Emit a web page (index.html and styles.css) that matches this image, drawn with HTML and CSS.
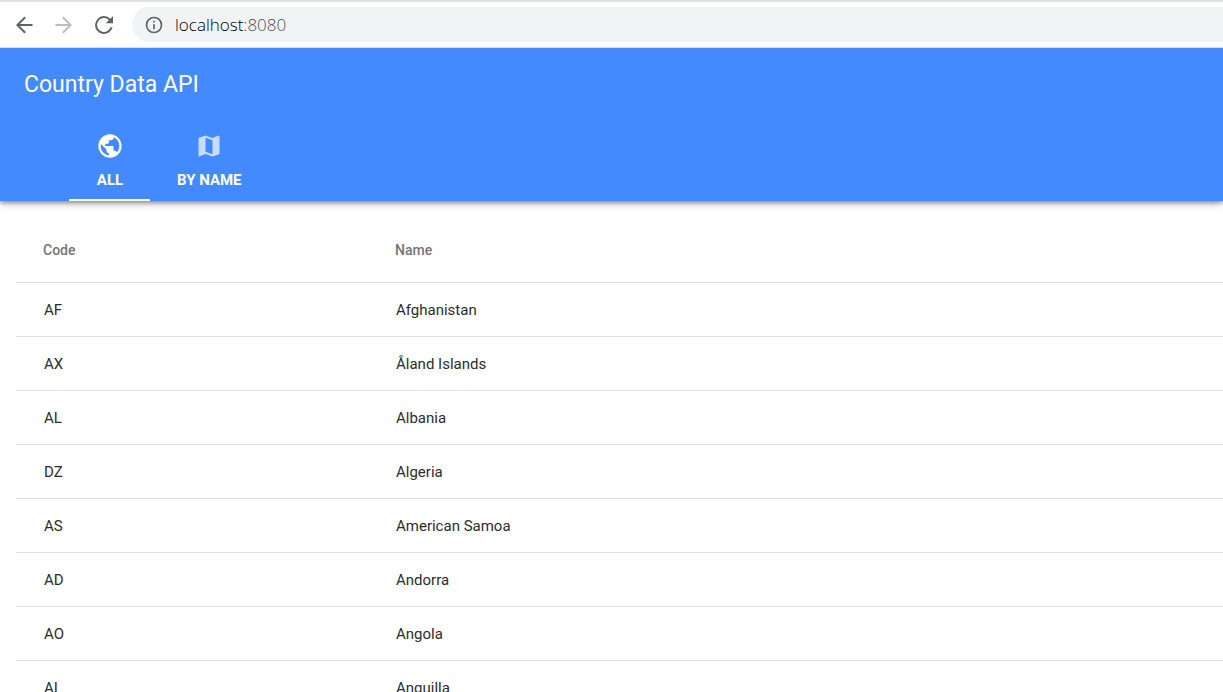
FILE: index.html
```
<!DOCTYPE html>
<html lang="en">
<head>
<meta charset="utf-8">
<title>Country Data API</title>
<link rel="stylesheet" href="styles.css">
</head>
<body>
<div class="browser">
  <button class="nav" aria-label="Back"><svg viewBox="0 0 24 24"><path d="M20 11H7.830l6.090-6.090L12.500 3.500 4 12l8.500 8.500 1.420-1.410L7.830 13H20.500v-2z"/></svg></button>
  <button class="nav nav-off" aria-label="Forward" disabled><svg viewBox="0 0 24 24"><path d="M4 11h12.170l-6.090-6.090L11.500 3.500 20 12l-8.500 8.500-1.420-1.410L16.170 13H3.500v-2z"/></svg></button>
  <button class="nav" aria-label="Reload"><svg viewBox="0 0 24 24"><path d="M18.300 5.700A8.900 8.900 0 0 0 12 3.100a8.900 8.900 0 1 0 8.600 11.100h-2.100A6.900 6.900 0 1 1 12 5.100c1.900 0 3.600.8 4.850 2.050L13.700 10.300H21V3z"/></svg></button>
  <div class="omnibox">
    <svg class="info" viewBox="0 0 24 24"><path d="M11 7h2v2h-2zm0 4h2v6h-2zm1-9a10 10 0 1 0 0 20 10 10 0 0 0 0-20zm0 18a8 8 0 1 1 0-16 8 8 0 0 1 0 16z"/></svg>
    <div class="url" role="textbox" aria-label="Address" contenteditable="true" spellcheck="false">localhost<span class="port">:8080</span></div>
  </div>
</div>
<header class="toolbar">
  <h1 class="title">Country Data API</h1>
  <nav class="tabs" role="tablist">
    <button class="tab tab-active" role="tab" aria-selected="true">
      <svg viewBox="0 0 24 24"><path d="M12 2C6.480 2 2 6.480 2 12s4.480 10 10 10 10-4.480 10-10S17.520 2 12 2zm-1 17.930c-3.950-.49-7-3.850-7-7.930 0-.62.08-1.210.21-1.790L9 15v1c0 1.100.9 2 2 2v1.930zm6.900-2.540c-.26-.81-1-1.390-1.900-1.390h-1v-3c0-.55-.45-1-1-1H8v-2h2c.55 0 1-.45 1-1V7h2c1.100 0 2-.9 2-2v-.41c2.930 1.190 5 4.060 5 7.410 0 2.080-.8 3.970-2.100 5.390z"/></svg>
      <span>ALL</span>
    </button>
    <button class="tab" role="tab" aria-selected="false">
      <svg viewBox="0 0 24 24"><path d="M20.500 3l-.16.03L15 5.100 9 3 3.360 4.900c-.21.07-.36.25-.36.48V20.500c0 .28.22.5.5.5l.16-.03L9 18.900l6 2.100 5.640-1.900c.21-.07.36-.25.36-.48V3.500c0-.28-.22-.5-.5-.5zM15 19l-6-2.110V5l6 2.110V19z"/></svg>
      <span>BY NAME</span>
    </button>
  </nav>
</header>
<main class="content">
  <table class="countries">
    <thead><tr><th class="code" scope="col">Code</th><th scope="col">Name</th></tr></thead>
    <tbody>
      <tr><td>AF</td><td>Afghanistan</td></tr>
      <tr><td>AX</td><td>Åland Islands</td></tr>
      <tr><td>AL</td><td>Albania</td></tr>
      <tr><td>DZ</td><td>Algeria</td></tr>
      <tr><td>AS</td><td>American Samoa</td></tr>
      <tr><td>AD</td><td>Andorra</td></tr>
      <tr><td>AO</td><td>Angola</td></tr>
      <tr><td>AI</td><td>Anguilla</td></tr>
    </tbody>
  </table>
</main>
</body>
</html>
```
FILE: styles.css
```
* { box-sizing: border-box; }
body {
  margin: 0;
  height: 100vh;
  overflow: hidden;
  background: #fff;
  font-family: Roboto, sans-serif;
}
button {
  border: 0;
  padding: 0;
  background: none;
  font: inherit;
}
svg { display: block; fill: currentColor; }

.browser {
  display: flex;
  align-items: center;
  gap: 16px;
  padding: 5px 0 5px 12px;
  border-top: 2px solid #dee1e6;
  border-bottom: 1px solid #dadce0;
}
.nav { color: #5f6368; }
.nav svg { width: 24px; height: 24px; }
.nav-off { color: #babcbe; }
.omnibox {
  flex: 1;
  display: flex;
  align-items: center;
  gap: 11px;
  height: 35px;
  padding-left: 12px;
  border-radius: 18px 0 0 18px;
  background: #f1f3f4;
}
.info { width: 20px; height: 20px; color: #5f6368; }
.url {
  flex: 1;
  font: 300 17px/24px "Open Sans", sans-serif;
  color: #000;
  outline: 0;
}
.port { color: #4c5055; }

.toolbar {
  background: #448aff;
  color: #fff;
  box-shadow: 0 1px 9px rgba(0, 0, 0, .3), 0 2px 4px rgba(0, 0, 0, .3);
  clip-path: inset(0 0 -16px);
}
.title {
  margin: 0;
  padding: 2px 24px 0;
  font-size: 23px;
  font-weight: 400;
  line-height: 70px;
}
.tabs { display: flex; padding-left: 69px; }
.tab {
  display: flex;
  flex-direction: column;
  align-items: center;
  gap: 10px;
  padding: 12px 26px 9px 27px;
  border-bottom: 2px solid transparent;
  color: #fff;
  font-size: 15px;
  font-weight: 700;
  line-height: 20px;
}
.tab svg { width: 28px; height: 28px; opacity: .7; }
.tab-active { border-color: #fff; }
.tab-active svg { opacity: 1; }

.content { padding: 18px 0 0 16px; }
.countries {
  width: 100%;
  border-collapse: collapse;
  text-align: left;
}
.countries th {
  height: 63px;
  padding: 0 27px;
  color: #757575;
  font-size: 14px;
  font-weight: 500;
}
.countries td {
  height: 54px;
  padding: 2px 28px 0;
  border-top: 1px solid #e0e0e0;
  color: #2c2c2c;
  font-size: 15px;
}
.countries .code { width: 352px; }
```
